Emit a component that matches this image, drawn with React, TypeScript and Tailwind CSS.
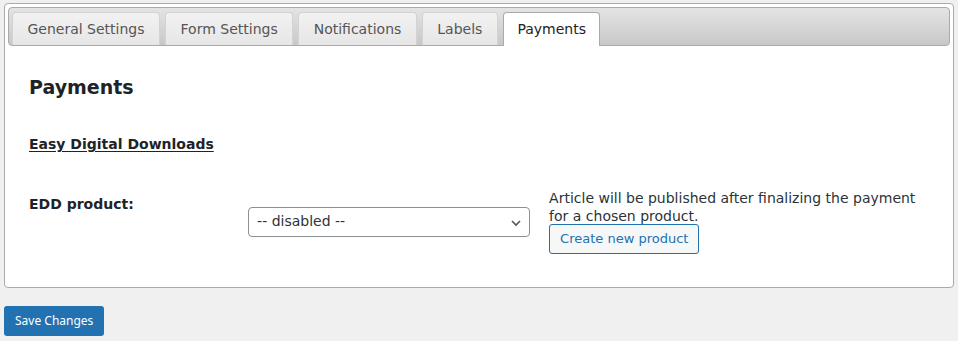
import React from 'react';

const tabs = ['General Settings', 'Form Settings', 'Notifications', 'Labels', 'Payments'];

const App = () => {
  const active = 'Payments';

  return (
    <div className="min-h-screen bg-[#f0f0f1] px-1 pt-[3px] font-['DejaVu_Sans',sans-serif] text-[#1d2327]">
      <div className="h-[285px] rounded-[4px] border border-[#aaaaaa] bg-white p-[3px]">
        <div className="flex h-[39px] items-end gap-[5px] rounded-[4px] border border-[#aaaaaa] bg-gradient-to-b from-[#e4e4e4] to-[#c8c8c8] pl-[3px] pr-[3px]">
          {tabs.map((tab) => {
            const isActive = tab === active;
            return (
              <div
                key={tab}
                className={
                  isActive
                    ? 'relative -mb-px flex h-[34px] items-center rounded-t-[4px] border border-b-0 border-[#aaaaaa] bg-white px-[13.5px] text-[14px] text-[#222222]'
                    : 'flex h-[33px] items-center rounded-t-[4px] border border-b-0 border-[#d3d3d3] bg-gradient-to-b from-[#f2f2f2] to-[#e6e6e6] px-[14.5px] text-[14px] text-[#555555]'
                }
              >
                {tab}
              </div>
            );
          })}
        </div>

        <div className="px-[21px] pt-[29px]">
          <h2 className="text-[19px] font-bold leading-6 text-[#1d2327]">Payments</h2>
          <h3 className="mt-[35px] text-[14px] font-bold leading-5 underline underline-offset-2">Easy Digital Downloads</h3>

          <div className="mt-[35px] flex">
            <div className="w-[222px] pt-[5px] text-[14px] font-bold leading-5">EDD product:</div>
            <div className="flex items-center">
              <div className="relative flex h-[30px] w-[282px] items-center rounded-[4px] border border-[#8c8f94] pl-[8px] text-[14px] text-[#2c3338]">
                -- disabled --
                <svg className="absolute right-[7px] top-[9px]" width="12" height="12" viewBox="0 0 12 12" fill="none">
                  <path d="M2 4l4 4 4-4" stroke="#50575e" strokeWidth="1.6" />
                </svg>
              </div>
            </div>
            <div className="ml-[19px] w-[385px]">
              <p className="text-[14px] leading-[18px] text-[#2c3338]">
                Article will be published after finalizing the payment for a chosen product.
              </p>
              <button className="-mt-px h-[30px] rounded-[3px] border border-[#2271b1] bg-[#f6f7f7] px-[10px] text-[13px] text-[#2271b1]">
                Create new product
              </button>
            </div>
          </div>
        </div>
      </div>

      <button className="mt-[18px] h-[30px] rounded-[3px] bg-[#2271b1] px-[11px] font-['Noto_Sans',sans-serif] text-[12px] text-white">
        Save Changes
      </button>
    </div>
  );
};

export default App;
